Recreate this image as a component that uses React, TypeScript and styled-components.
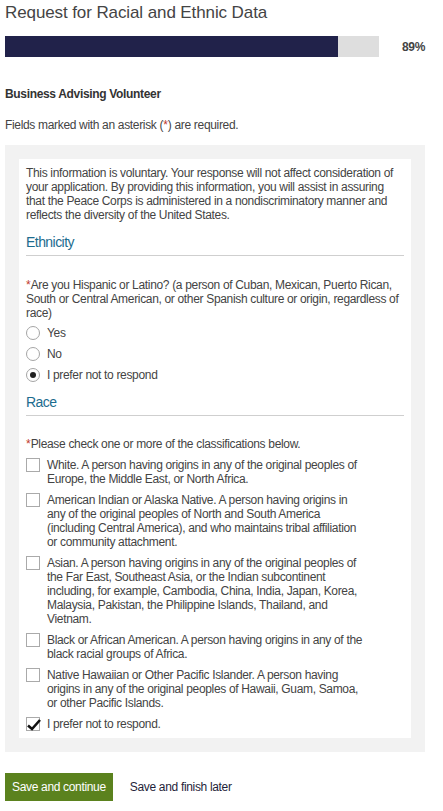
import React from "react";
import styled, { createGlobalStyle } from "styled-components";

const Global = createGlobalStyle`
  html, body { margin: 0; padding: 0; background: #fff; }
  body {
    font-family: "Liberation Sans", Arial, sans-serif;
    font-size: 12px;
    line-height: 14px;
    letter-spacing: -0.33px;
    color: #444;
  }
  * { box-sizing: border-box; }
`;

const Page = styled.div`
  width: 420px;
  margin-left: 5px;
`;

const Title = styled.h1`
  margin: 0;
  font-size: 17px;
  line-height: 26px;
  letter-spacing: -0.1px;
  font-weight: normal;
  color: #444;
`;

const ProgressRow = styled.div`
  display: flex;
  align-items: center;
  margin-top: 10px;
  height: 21px;
`;

const Track = styled.div`
  width: 375px;
  height: 21px;
  background: #dedede;
`;

const Fill = styled.div`
  height: 100%;
  background: #21224a;
`;

const Percent = styled.span`
  margin-left: 23px;
  font-weight: bold;
  color: #444;
`;

const Program = styled.div`
  margin-top: 30px;
  font-weight: bold;
  color: #333;
`;

const Note = styled.p`
  margin: 17px 0 0;
`;

const Panel = styled.div`
  margin-top: 13px;
  background: #f2f2f2;
  padding: 14px;
`;

const Card = styled.div`
  background: #fff;
  padding: 7px;
`;

const Intro = styled.p`
  margin: 0;
`;

const SectionHeading = styled.h2<{ $top: number }>`
  margin: ${(p) => p.$top}px 0 0;
  font-size: 14px;
  line-height: 20px;
  letter-spacing: -0.55px;
  font-weight: normal;
  color: #1c6c8e;
  padding-bottom: 3px;
  border-bottom: 1px solid #cfcfcf;
`;

const Question = styled.p<{ $top: number }>`
  margin: ${(p) => p.$top}px 0 0;
`;

const Req = styled.span`
  color: #c0392b;
  letter-spacing: 0;
`;

const RadioList = styled.div`
  margin-top: 2px;
  display: flex;
  flex-direction: column;
`;

const RadioRow = styled.label`
  display: flex;
  align-items: center;
  height: 21px;
  gap: 7px;
`;

const RadioCircle = styled.span<{ $checked?: boolean }>`
  width: 14px;
  height: 14px;
  border-radius: 50%;
  border: 1px solid #a5a5a5;
  background: #fff;
  display: flex;
  align-items: center;
  justify-content: center;
  flex: none;
  &::after {
    content: "";
    display: ${(p) => (p.$checked ? "block" : "none")};
    width: 6px;
    height: 6px;
    border-radius: 50%;
    background: #222;
  }
`;

const CheckList = styled.div`
  margin-top: 7px;
  display: flex;
  flex-direction: column;
  gap: 7px;
`;

const CheckRow = styled.label`
  display: flex;
  align-items: flex-start;
  gap: 7px;
`;

const CheckBox = styled.span`
  position: relative;
  width: 14px;
  height: 14px;
  border: 1px solid #aaa;
  background: #fff;
  flex: none;
  svg {
    position: absolute;
    left: -1px;
    top: -1px;
  }
`;

const CheckText = styled.span`
  max-width: 318px;
`;

const Actions = styled.div`
  margin-top: 21px;
  display: flex;
  align-items: center;
`;

const Primary = styled.button`
  height: 28px;
  padding: 0 7px;
  border: none;
  background: #5b821e;
  color: #fff;
  font-family: inherit;
  font-size: 12px;
  letter-spacing: inherit;
`;

const Secondary = styled.button`
  margin-left: 10px;
  height: 28px;
  padding: 0 7px;
  border: none;
  background: transparent;
  color: #1f1f3a;
  font-family: inherit;
  font-size: 12px;
  letter-spacing: inherit;
`;

const Check = () => (
  <svg width="16" height="16" viewBox="0 0 16 16">
    <path d="M2 8.5 L6 12 L14 3" fill="none" stroke="#111" strokeWidth="2.6" strokeLinejoin="miter" />
  </svg>
);

const races: { text: string; checked?: boolean }[] = [
  { text: "White. A person having origins in any of the original peoples of Europe, the Middle East, or North Africa." },
  { text: "American Indian or Alaska Native. A person having origins in any of the original peoples of North and South America (including Central America), and who maintains tribal affiliation or community attachment." },
  { text: "Asian. A person having origins in any of the original peoples of the Far East, Southeast Asia, or the Indian subcontinent including, for example, Cambodia, China, India, Japan, Korea, Malaysia, Pakistan, the Philippine Islands, Thailand, and Vietnam." },
  { text: "Black or African American. A person having origins in any of the black racial groups of Africa." },
  { text: "Native Hawaiian or Other Pacific Islander. A person having origins in any of the original peoples of Hawaii, Guam, Samoa, or other Pacific Islands." },
  { text: "I prefer not to respond.", checked: true },
];

const radios = [
  { text: "Yes" },
  { text: "No" },
  { text: "I prefer not to respond", checked: true },
];

export default function App() {
  const progress = 89;
  return (
    <Page>
      <Global />
      <Title>Request for Racial and Ethnic Data</Title>
      <ProgressRow>
        <Track>
          <Fill style={{ width: `${progress}%` }} />
        </Track>
        <Percent>{progress}%</Percent>
      </ProgressRow>
      <Program>Business Advising Volunteer</Program>
      <Note>Fields marked with an asterisk (<Req>*</Req>) are required.</Note>
      <Panel>
        <Card>
          <Intro>
            This information is voluntary. Your response will not affect consideration of your application. By
            providing this information, you will assist in assuring that the Peace Corps is administered in a
            nondiscriminatory manner and reflects the diversity of the United States.
          </Intro>
          <SectionHeading $top={10}>Ethnicity</SectionHeading>
          <Question $top={22}>
            <Req>*</Req>Are you Hispanic or Latino? (a person of Cuban, Mexican, Puerto Rican, South or Central
            American, or other Spanish culture or origin, regardless of race)
          </Question>
          <RadioList>
            {radios.map((r) => (
              <RadioRow key={r.text}>
                <RadioCircle $checked={r.checked} />
                <span>{r.text}</span>
              </RadioRow>
            ))}
          </RadioList>
          <SectionHeading $top={7}>Race</SectionHeading>
          <Question $top={21}>
            <Req>*</Req>Please check one or more of the classifications below.
          </Question>
          <CheckList>
            {races.map((r) => (
              <CheckRow key={r.text}>
                <CheckBox>{r.checked && <Check />}</CheckBox>
                <CheckText>{r.text}</CheckText>
              </CheckRow>
            ))}
          </CheckList>
        </Card>
      </Panel>
      <Actions>
        <Primary>Save and continue</Primary>
        <Secondary>Save and finish later</Secondary>
      </Actions>
    </Page>
  );
}
